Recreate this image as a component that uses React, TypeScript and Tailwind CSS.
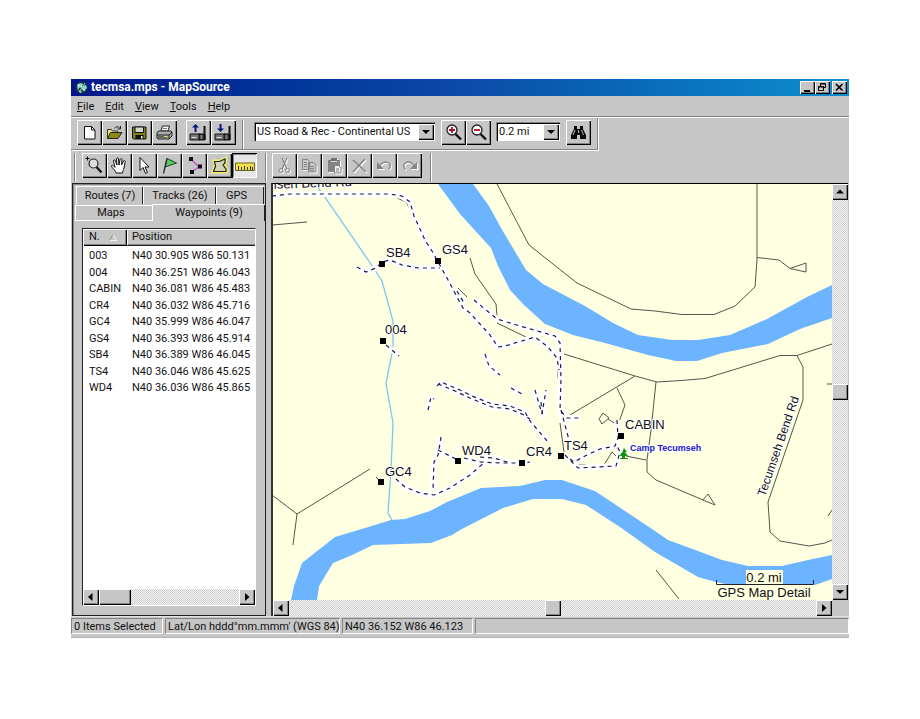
import React, { ReactNode } from "react";

const raised =
  "bg-[#c6c6c6] shadow-[inset_1px_1px_0_#fff,inset_-1px_-1px_0_#000,inset_-2px_-2px_0_#848484]";
const dither =
  "bg-[repeating-conic-gradient(#f4f4f4_0_25%,#cfcfcf_0_50%)] bg-[size:2px_2px]";

function ToolButton({
  label,
  disabled,
  pressed,
  children,
}: {
  label: string;
  disabled?: boolean;
  pressed?: boolean;
  children: ReactNode;
}) {
  return (
    <button
      type="button"
      aria-label={label}
      disabled={disabled}
      aria-pressed={pressed}
      className={`size-[25px] shrink-0 ${
        pressed
          ? "bg-[#e6e6e6] shadow-[inset_1px_1px_0_#000,inset_-1px_-1px_0_#fff,inset_2px_2px_0_#848484]"
          : raised
      }`}
    >
      <svg
        viewBox="0 0 25 25"
        fill="none"
        className={`size-[25px] ${disabled ? "drop-shadow-[1px_1px_0_#fff]" : ""}`}
      >
        {children}
      </svg>
    </button>
  );
}

function Arrow({ d, label }: { d: string; label: string }) {
  return (
    <button type="button" aria-label={label} className={`size-4 shrink-0 ${raised}`}>
      <svg viewBox="0 0 16 16" className="size-4">
        <path d={d} fill="#000" />
      </svg>
    </button>
  );
}
const LEFT = "M9.500 4v8L5 8z";
const RIGHT = "M6 4v8l4.500-4z";
const UP = "M4 9.500h8L8 5.500z";
const DOWN = "M4 6h8l-4 4z";

function Combo({ label, value, width }: { label: string; value: string; width: string }) {
  return (
    <div
      className={`relative flex h-[19px] bg-white shadow-[inset_1px_1px_0_#848484,inset_2px_2px_0_#000,inset_-1px_-1px_0_#fff] ${width}`}
    >
      <select
        aria-label={label}
        className="w-full appearance-none bg-transparent pl-[3px] pr-4 text-[11px] leading-[19px] outline-none"
      >
        <option>{value}</option>
      </select>
      <span className={`pointer-events-none absolute right-px top-[2px] size-4 ${raised}`}>
        <svg viewBox="0 0 16 16" className="size-4">
          <path d={DOWN} fill="#000" />
        </svg>
      </span>
    </div>
  );
}

function Divider() {
  return <div className="h-full w-[2px] border-l border-r border-l-[#848484] border-r-white" />;
}

function TitleBar() {
  return (
    <header className="flex h-[17px] items-center bg-linear-to-r from-[#03168a] via-[#0c4aa8] to-[#108fd0] pl-1 pr-[2px] text-white">
      <svg viewBox="0 0 13 13" className="mr-[3px] size-[13px]">
        <circle cx="6.500" cy="6.500" r="6" fill="#173b3b" />
        <path d="M2 4l3-2 3 1-1 3-3 1-1 3zM8 5l3-1 1 3-3 3-2-1zM5 9l2 2-1 1-2-1z" fill="#8fd8d0" />
        <path d="M3 3l7 7M10 2L4 11" stroke="#e6ffff" strokeWidth=".7" />
      </svg>
      <h1 className="flex-1 text-[12px] font-bold leading-[17px]">tecmsa.mps - MapSource</h1>
      <div className="flex text-black">
        <button type="button" aria-label="Minimize" className={`h-[13px] w-[15px] ${raised}`}>
          <svg viewBox="0 0 15 13" className="h-[13px] w-[15px]">
            <path d="M4 9h6v2H4z" />
          </svg>
        </button>
        <button type="button" aria-label="Restore" className={`h-[13px] w-[15px] ${raised}`}>
          <svg viewBox="0 0 15 13" className="h-[13px] w-[15px]" fill="none" stroke="#000">
            <path d="M5.500 5V2.500h5v4H9M5 3h6M3.500 5.500h5v4h-5zM3 6h6" />
          </svg>
        </button>
        <button type="button" aria-label="Close" className={`ml-[2px] h-[13px] w-[15px] ${raised}`}>
          <svg viewBox="0 0 15 13" className="h-[13px] w-[15px]" fill="none" stroke="#000" strokeWidth="1.600">
            <path d="M4 3l6.500 6.500M10.500 3L4 9.500" />
          </svg>
        </button>
      </div>
    </header>
  );
}

function MenuBar() {
  return (
    <nav className="flex h-[21px] items-center gap-[11px] border-b border-[#848484] pl-[6px]">
      {["File", "Edit", "View", "Tools", "Help"].map((m) => (
        <button key={m} type="button" className="leading-[19px]">
          <span className="underline">{m[0]}</span>
          {m.slice(1)}
        </button>
      ))}
    </nav>
  );
}

function Lens({ children }: { children: ReactNode }) {
  return (
    <>
      <circle cx="11" cy="10" r="5" fill="#fff" stroke="#222" strokeWidth="1.300" />
      <path d="M14.500 14l5.500 5.500" stroke="#111" strokeWidth="2.400" />
      {children}
    </>
  );
}

function Device({ arrow }: { arrow: string }) {
  return (
    <>
      <path d="M4 14h10v6H4z" fill="#777" stroke="#111" />
      <path d="M5.500 17.500h5" stroke="#ddd" />
      <path d="M13 14h6v6h-6z" fill="#333" stroke="#111" />
      <path d="M18.500 6v14" stroke="#111" strokeWidth="2" />
      <path d="M14.500 16h2M14.500 18h2" stroke="#ccc" />
      <path d={arrow} fill="#10108c" />
    </>
  );
}

function MainToolbar() {
  return (
    <div className="flex border-t border-white">
      <div className="flex h-8 items-start border-b border-r border-[#848484] pl-[6px] pr-[6px] pt-[2px] shadow-[1px_1px_0_#fff]">
        <ToolButton label="New">
          <path d="M7.500 6.500h7l3.500 3.500v9H7.500z" fill="#fff" stroke="#111" />
          <path d="M14.500 6.500V10H18" stroke="#111" />
        </ToolButton>
        <ToolButton label="Open">
          <path d="M5.500 18.500V9.500h4l1 1.500h5v2" fill="#e8e86a" stroke="#333" />
          <path d="M5.500 18.500l3-6H20l-4 6z" fill="#8c8c10" stroke="#222" />
          <path d="M12.500 8.500c1-2 4-2.500 5.500 0M18.500 6v3h-3" stroke="#222" />
        </ToolButton>
        <ToolButton label="Save">
          <path d="M5.500 7h13.500v12H6.500l-1-1z" fill="#80801a" stroke="#111" />
          <path d="M8 7h8.500v5.500H8z" fill="#d6d6c8" stroke="#111" />
          <path d="M8.500 15h8v4h-8z" fill="#111" />
          <path d="M14 16h1.500v2.500H14z" fill="#fff" />
        </ToolButton>
        <ToolButton label="Print">
          <path d="M8.500 12l2-6h7l-2 6z" fill="#fff" stroke="#222" />
          <path d="M10.500 8.500h4.500M10 10.500h4.500" stroke="#777" />
          <path d="M5 12.500l2-1.500h12l1 1v4l-3 3H6l-1-1z" fill="#aaa" stroke="#222" />
          <path d="M5 15h12l3-3M17 15v4M6 17h9" stroke="#222" />
          <path d="M12 16.500h3" stroke="#e8e83a" />
        </ToolButton>
        <div className="w-[9px]" />
        <ToolButton label="Save to device">
          <Device arrow="M9.500 4l3.500 3.500h-2.500V12h-2V7.500H6z" />
        </ToolButton>
        <ToolButton label="Open from device">
          <Device arrow="M9.500 12L13 8.500h-2.500V4h-2v4.500H6z" />
        </ToolButton>
        <div className="ml-[6px] mr-[10px] h-[29px]">
          <Divider />
        </div>
        <Combo label="Map product" value="US Road & Rec - Continental US" width="mt-[2px] w-[181px]" />
        <div className="w-[6px]" />
        <ToolButton label="Zoom in">
          <Lens>
            <path d="M8 10h6M11 7v6" stroke="#b0102a" strokeWidth="1.800" />
          </Lens>
        </ToolButton>
        <ToolButton label="Zoom out">
          <Lens>
            <path d="M8 10h6" stroke="#b0102a" strokeWidth="1.800" />
          </Lens>
        </ToolButton>
        <div className="w-[5px]" />
        <Combo label="Zoom scale" value="0.2 mi" width="mt-[2px] w-[64px]" />
        <div className="w-[6px]" />
        <ToolButton label="Find">
          <path d="M8 6h3v3h3V6h3v3l3 6v4h-6v-4h-3v4H5v-4l3-6z" fill="#0a0a0a" />
          <path d="M9 10l-2 5M15.500 10l2 5M12.500 10v3" stroke="#b8b8b8" />
        </ToolButton>
      </div>
    </div>
  );
}

function MapToolbar() {
  return (
    <div className="flex h-[33px] items-start pl-[3px] pt-[3px]">
      <div className="mr-[6px] h-[29px]">
        <Divider />
      </div>
      <ToolButton label="Zoom tool">
        <path d="M3.500 5.500h4M5.500 3.500v4" stroke="#111" />
        <circle cx="11.500" cy="10.500" r="4.500" fill="#ddd" stroke="#222" strokeWidth="1.200" />
        <path d="M14.500 14l5 5.500" stroke="#111" strokeWidth="2.200" />
      </ToolButton>
      <ToolButton label="Hand tool">
        <path
          d="M9 20c0-2-3-4-4.500-6.500-.5-1.500 1.500-1.500 2.500 0l1 1L6.500 8c0-1.500 1.500-1.500 2 0l1.500 4-.5-6c0-1.500 2-1.500 2 0l.5 6 1-5.500c.3-1.300 2-1 2 .3L14.500 12l2-4c.7-1 2-.3 1.700.8L17 15c-.5 2-1.500 3-1.500 5z"
          fill="#fff"
          stroke="#111"
        />
      </ToolButton>
      <ToolButton label="Select tool">
        <path d="M8 4.500v13l3-3 2.500 6 2-1-2.500-5.500h4z" fill="#fff" stroke="#111" />
      </ToolButton>
      <ToolButton label="Waypoint tool">
        <path d="M10 5.500l9.500 4.500-11.500 4z" fill="#5cc86a" stroke="#164a1c" />
        <path d="M10 5.500L6.500 20.500" stroke="#222" strokeWidth="1.200" />
      </ToolButton>
      <ToolButton label="Route tool">
        <path d="M9 6l8 8-8 5" stroke="#c850c8" strokeWidth="1.400" />
        <path d="M7 4h4v4H7zM16 11.500h4v4h-4zM8 17h4v4H8z" fill="#111" />
      </ToolButton>
      <ToolButton label="Map tool">
        <path d="M7.500 8.500h5l5.500-2.500v4l-2 2 3 4v2.500H6.500l2-5z" stroke="#f0f060" strokeWidth="4" />
        <path d="M7.500 8.500h5l5.500-2.500v4l-2 2 3 4v2.500H6.500l2-5z" fill="#d2d2b4" stroke="#222" strokeWidth="1.200" />
      </ToolButton>
      <ToolButton label="Measure tool" pressed>
        <path d="M3.500 10h19v7.500h-19z" fill="#f2e04a" stroke="#6c6420" />
        <path d="M6.500 17v-4M9.500 17v-3M12.500 17v-4M15.500 17v-3M18.500 17v-4M20.500 17v-3" stroke="#333" />
      </ToolButton>
      <div className="ml-[8px] mr-[5px] h-[29px]">
        <Divider />
      </div>
      <ToolButton label="Cut" disabled>
        <path d="M10 5l5 11M15 5l-5 11" stroke="#848484" strokeWidth="1.200" />
        <circle cx="9" cy="17.500" r="2" stroke="#848484" />
        <circle cx="15.500" cy="17.500" r="2" stroke="#848484" />
      </ToolButton>
      <ToolButton label="Copy" disabled>
        <path d="M5.500 6.500h5l2 2v8h-7zM11.500 9.500h5l2.500 2.500v7h-7.500z" fill="#c6c6c6" stroke="#848484" />
        <path d="M7 9.500h3M7 11.500h3M7 13.500h3M13 13.500h4M13 15.500h4M13 17.500h4" stroke="#848484" />
      </ToolButton>
      <ToolButton label="Paste" disabled>
        <path d="M6 7h12v12H6z" fill="#848484" />
        <path d="M9 5h6v3H9z" fill="#707070" />
        <path d="M9 8.500h6" stroke="#ddd" />
        <path d="M12.500 12.500h4l2.500 2.500v5h-6.500z" fill="#eee" stroke="#848484" />
        <path d="M14 16h3M14 18h3" stroke="#848484" />
      </ToolButton>
      <ToolButton label="Delete" disabled>
        <path d="M6 7l13 12M18 6L6 19" stroke="#848484" strokeWidth="1.700" />
      </ToolButton>
      <ToolButton label="Undo" disabled>
        <path d="M7 14c2-4 6-6 9-4.500s3 5 .5 7" stroke="#848484" strokeWidth="1.300" />
        <path d="M5 9v7h7z" fill="#848484" />
      </ToolButton>
      <ToolButton label="Redo" disabled>
        <path d="M18 14c-2-4-6-6-9-4.500s-3 5-.5 7" stroke="#848484" strokeWidth="1.300" />
        <path d="M20 9v7h-7z" fill="#848484" />
      </ToolButton>
      <div className="ml-[8px] h-[29px]">
        <Divider />
      </div>
    </div>
  );
}

const waypoints = [
  ["003", "N40 30.905 W86 50.131"],
  ["004", "N40 36.251 W86 46.043"],
  ["CABIN", "N40 36.081 W86 45.483"],
  ["CR4", "N40 36.032 W86 45.716"],
  ["GC4", "N40 35.999 W86 46.047"],
  ["GS4", "N40 36.393 W86 45.914"],
  ["SB4", "N40 36.389 W86 46.045"],
  ["TS4", "N40 36.046 W86 45.625"],
  ["WD4", "N40 36.036 W86 45.865"],
];

const tab = "border-l border-t border-white shadow-[inset_-1px_0_0_#222] text-center";

function SidePanel() {
  return (
    <aside className="ml-px flex w-[194px] shrink-0 flex-col border border-[#222] shadow-[inset_1px_1px_0_#848484]">
      <div role="tablist" className="pt-[2px]">
        <div className="flex h-[18px] pl-[3px] leading-[18px]">
          <button type="button" role="tab" className={`w-[67px] ${tab}`}>Routes (7)</button>
          <button type="button" role="tab" className={`w-[73px] ${tab}`}>Tracks (26)</button>
          <button type="button" role="tab" className={`w-[48px] pr-2 ${tab}`}>GPS</button>
        </div>
        <div className="flex h-[17px] items-end pl-[2px] leading-4">
          <button type="button" role="tab" className="h-4 w-[77px] border-y border-l border-white pr-[6px] leading-[14px]">
            Maps
          </button>
          <button
            type="button"
            role="tab"
            aria-selected="true"
            className="h-[17px] flex-1 border-l border-t border-white leading-[14px] shadow-[inset_-1px_0_0_#222]"
          >
            Waypoints (9)
          </button>
        </div>
      </div>
      <div className="flex flex-1 flex-col px-[9px] pb-[9px] pt-[7px]">
        <div className="flex flex-1 flex-col border border-b-white border-l-[#222] border-r-white border-t-[#222] bg-white">
          <table className="w-full table-fixed text-left">
            <thead>
              <tr>
                <th className="h-[19px] w-[44px] p-0 align-top font-normal">
                  <div className={`flex h-[17px] items-center pl-[6px] ${raised}`}>
                    N.
                    <svg viewBox="0 0 8 7" className="ml-[9px] h-[7px] w-2" fill="none">
                      <path d="M4 .5L.5 6.500h7z" stroke="#f4f4f4" />
                      <path d="M4 .5L.5 6.500" stroke="#848484" />
                    </svg>
                  </div>
                </th>
                <th className="h-[19px] p-0 align-top font-normal">
                  <div className="h-[17px] border-b border-[#222] bg-[#c6c6c6] pl-[5px] leading-4 shadow-[inset_1px_1px_0_#fff,inset_0_-1px_0_#848484]">
                    Position
                  </div>
                </th>
              </tr>
            </thead>
            <tbody>
              {waypoints.map(([name, pos]) => (
                <tr key={name} className="odd:h-4 even:h-[17px]">
                  <td className="whitespace-nowrap p-0 pl-[6px] leading-4">{name}</td>
                  <td className="whitespace-nowrap p-0 pl-[5px] leading-4">{pos}</td>
                </tr>
              ))}
            </tbody>
          </table>
          <div className="flex-1" />
          <div className={`flex ${dither}`}>
            <Arrow d={LEFT} label="Scroll list left" />
            <div className={`w-8 ${raised}`} />
            <div className="flex-1" />
            <Arrow d={RIGHT} label="Scroll list right" />
          </div>
        </div>
      </div>
    </aside>
  );
}

const roads = [
  "M297 191.500H387",
  "M272 225L307 222",
  "M397 198L406 202L412 213",
  "M497 184L529 245L577 283L631 309L655 311L682 314.500H714L735 306L755 287L757 260V184",
  "M757 257.500L779 260L790 268.500L806 263V272L790 268.500",
  "M470 258L475 274L496 304L497 316",
  "M458 288L467 297",
  "M497 323L526 337",
  "M564 354L635 376L657 382L681 380.500L705 378.500L780 355.500H797L832 344",
  "M797 355.500L803 367V400L768 502L770 532L780 541L809 546L825 543L832 540",
  "M656 382L651 430L647 460V472L656 480L703 500L715 505L708 494L703 500",
  "M635 376L570 415",
  "M617 388L625 405L619 422",
  "M603 413L609 418L602 424L599 419ZM608 419L614 423",
  "M626 456L646 460",
  "M604 465L612 452L616 456",
  "M558 366V378",
  "M560 423L564 452",
  "M577 465H586",
  "M272 495L297 514L370 469M297 514L293 545",
  "M656 570L679 599",
  "M827 384H832M828 516L832 510",
  "M376 477L381 482M396 352L399 356",
];

const tracks = [
  "M272 196L290 194H390L402 196L410 202L414 216L425 240L432 251L437 260L447 278L457 297L463 308L470 313L490 335L498 347L505 346L535 337L548 347L557 358L559 370",
  "M457 291L464 303M474 300L497 319L520 326L555 336L560 343L561 380L560 410L567 418H580",
  "M485 354L489 366L500 375",
  "M511 388L522 394",
  "M357 267L366 272L376 268L382 262L390 260L402 265L418 268H440",
  "M386 345L399 356",
  "M428 410L431 397L434 399",
  "M437 386L441 382L460 390L472 396L492 404L510 406L525 412L530 421L548 442",
  "M438 384L455 391L472 399L492 407L510 409L524 415L530 419",
  "M535 390L542 414L546 390",
  "M541 402L543 418",
  "M441 437L438 455L434 462L433 490",
  "M438 450L456 459",
  "M396 479L405 487L420 493L434 495L450 488L470 475L485 462",
  "M464 458L480 462L500 463L521 463L530 462",
  "M480 457L494 458L510 463",
  "M561 410L569 440",
  "M565 455L578 468L616 466L620 452L616 444",
  "M570 459L574 462L585 456L600 449L615 446L618 438L617 420",
];

const marks: [string, number, number, number, number][] = [
  ["SB4", 382, 264, 386, 257],
  ["GS4", 438, 261, 442, 254],
  ["004", 383, 341, 385, 334],
  ["GC4", 381, 482, 385, 476],
  ["WD4", 458, 461, 462, 455],
  ["CR4", 522, 463, 526, 456],
  ["TS4", 561, 456, 564, 450],
  ["CABIN", 621, 436, 625, 429],
];

function MapCanvas() {
  return (
    <svg
      viewBox="273 184 559 416"
      preserveAspectRatio="xMinYMin slice"
      className="h-[416px] min-w-0 flex-1 bg-[#ffffe1]"
      fill="none"
      role="img"
      aria-label="GPS map"
    >
      <g fill="#6cb4ff">
        <path d="M438 184L460 214L491 248L498 266L510 290L524 305L545 324L573 335L605 343L648 355L676 361H697L722 353L768 344L800 329L832 318V285L807 297L767 319L730 335L698 340H672L638 335L613 323L585 306L543 284L526 270L501 228L489 206L473 184Z" />
        <path d="M291 600L294 586L302 563L335 537L375 525L391 520L405 519L430 511L447 502L481 488L520 486L545 480H562L595 491L625 511L655 531L668 540L698 551L722 560L748 566H782L808 560L832 555V579L815 585L790 587H740L716 582L698 577L655 552L620 527L586 505L562 499H533L503 508L460 530L452 535L431 543L373 545L350 556L333 563L319 586L317 600Z" />
      </g>
      <path
        d="M315 184L322 193L373 267L382 281L393 321V348L386 383L393 423L391 470L388 513L392 520"
        stroke="#7cc6ee"
        strokeWidth="1.300"
      />
      <g stroke="#55554c">
        {roads.map((d) => (
          <path key={d} d={d} />
        ))}
      </g>
      <g stroke="#fff" strokeWidth="6" strokeLinejoin="round">
        {tracks.map((d) => (
          <path key={d} d={d} />
        ))}
      </g>
      <g stroke="#1c1c4c" strokeWidth="1.200" strokeDasharray="4 4">
        {tracks.map((d) => (
          <path key={d} d={d} />
        ))}
      </g>
      <path d="M624 448l3 4h-2l3 4h-3v2h3v1h-8v-1h2v-2h-2l1-3h1z" fill="#109018" />
      <g
        className="font-['Liberation_Sans',Arial,sans-serif] text-[13px]"
        fill="#111"
        stroke="#fff"
        strokeWidth="2"
        paintOrder="stroke"
        strokeLinejoin="round"
      >
        {marks.map(([t, mx, my, x, y]) => (
          <g key={t}>
            <rect x={mx - 3} y={my - 3} width="6" height="6" fill="#000" stroke="none" />
            <text x={x} y={y}>{t}</text>
          </g>
        ))}
        <text x="352" y="186" textAnchor="end" transform="rotate(-2 352 186)">Tecumseh Bend Rd</text>
        <text x="765" y="497" className="text-[12px]" transform="rotate(-71 765 497)">Tecumseh Bend Rd</text>
        <text x="630" y="451" className="text-[9px] font-bold" fill="#1616c8">Camp Tecumseh</text>
        <path d="M746 570h37v14h-37z" fill="#ffffe1" stroke="none" />
        <path d="M716 584h98v16h-98z" fill="#ffffe1" stroke="none" />
        <text x="764" y="582" textAnchor="middle" stroke="none">0.2 mi</text>
        <text x="764" y="597" textAnchor="middle" stroke="none">GPS Map Detail</text>
      </g>
      <path d="M716.500 580V584.500H813.500V580" stroke="#222" />
    </svg>
  );
}

function MapPane() {
  return (
    <main className="ml-[5px] mr-px flex min-w-0 flex-1 flex-col border-l-2 border-t border-[#333] border-t-black">
      <div className="flex">
        <MapCanvas />
        <div className={`flex w-4 shrink-0 flex-col ${dither}`}>
          <Arrow d={UP} label="Scroll map up" />
          <div className="flex-1" />
          <div className={`size-4 ${raised}`} />
          <div className="flex-1" />
          <Arrow d={DOWN} label="Scroll map down" />
        </div>
      </div>
      <div className="flex">
        <div className={`flex flex-1 ${dither}`}>
          <Arrow d={LEFT} label="Scroll map left" />
          <div className="flex-1" />
          <div className={`size-4 ${raised}`} />
          <div className="flex-1" />
          <Arrow d={RIGHT} label="Scroll map right" />
        </div>
        <div className="size-4 bg-[#c6c6c6]" />
      </div>
    </main>
  );
}

function StatusBar() {
  const pane =
    "h-4 pl-[2px] leading-4 border border-l-[#848484] border-t-[#848484] border-r-white border-b-white whitespace-nowrap";
  return (
    <footer className="border-t border-[#e4e4e4] pb-[3px] pt-px">
      <div className="flex items-start gap-[2px]">
        <div className={`w-[92px] ${pane}`}>0 Items Selected</div>
        <div className={`w-[175px] ${pane}`}>Lat/Lon hddd°mm.mmm' (WGS 84)</div>
        <div className={`w-[131px] ${pane}`}>N40 36.152 W86 46.123</div>
        <div className={`flex-1 ${pane}`} />
      </div>
    </footer>
  );
}

export default function App() {
  return (
    <div className="min-h-screen bg-white px-[71px] pb-20 pt-[79px] font-[Roboto,'Liberation_Sans',Arial,sans-serif] text-[11px] text-[#111]">
      <div className="border-b border-[#b4b4b4] bg-[#c6c6c6]">
        <TitleBar />
        <MenuBar />
        <MainToolbar />
        <MapToolbar />
        <div className="flex">
          <SidePanel />
          <MapPane />
        </div>
        <StatusBar />
      </div>
    </div>
  );
}
